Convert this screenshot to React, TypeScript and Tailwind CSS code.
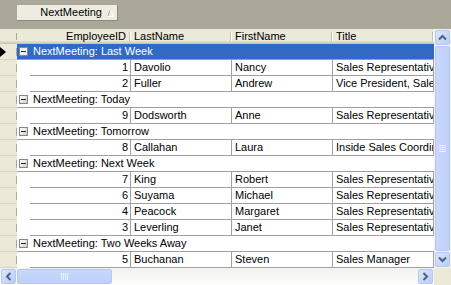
import React from 'react'

type Row = [number, string, string, string]
type Group = { name: string; rows: Row[] }

const GROUPS: Group[] = [
  { name: 'Last Week', rows: [[1, 'Davolio', 'Nancy', 'Sales Representative'], [2, 'Fuller', 'Andrew', 'Vice President, Sales']] },
  { name: 'Today', rows: [[9, 'Dodsworth', 'Anne', 'Sales Representative']] },
  { name: 'Tomorrow', rows: [[8, 'Callahan', 'Laura', 'Inside Sales Coordinator']] },
  {
    name: 'Next Week',
    rows: [
      [7, 'King', 'Robert', 'Sales Representative'],
      [6, 'Suyama', 'Michael', 'Sales Representative'],
      [4, 'Peacock', 'Margaret', 'Sales Representative'],
      [3, 'Leverling', 'Janet', 'Sales Representative'],
    ],
  },
  { name: 'Two Weeks Away', rows: [[5, 'Buchanan', 'Steven', 'Sales Manager']] },
]

const ROT = { up: '', right: 'rotate-90', down: 'rotate-180', left: '-rotate-90' }

function Chevron({ dir }: { dir: keyof typeof ROT }) {
  return (
    <svg width="9" height="7" viewBox="0 0 9 7" className={ROT[dir]}>
      <path d="M1 5.5 L4.5 2 L8 5.5" fill="none" stroke="#4D6185" strokeWidth="2" />
    </svg>
  )
}

function ScrollBtn({ dir }: { dir: keyof typeof ROT }) {
  return (
    <div className="w-[15px] h-[15px] shrink-0 rounded-[2px] border border-[#B4C8F6] bg-gradient-to-br from-[#DCE6FD] to-[#B9CDFA] flex items-center justify-center">
      <Chevron dir={dir} />
    </div>
  )
}

function Indicator({ current }: { current?: boolean }) {
  return (
    <div className="w-[17px] h-4 shrink-0 bg-[#ECE9D8] border-b border-[#D8D4C4] flex items-center justify-between">
      {current ? (
        <svg width="6" height="10" viewBox="0 0 6 10"><path d="M0 0 L6 5 L0 10 Z" fill="#000" /></svg>
      ) : <span />}
      <span className="w-px h-[8px] bg-[#ACA899]" />
    </div>
  )
}

function HeaderCell({ label, right, w }: { label: string; right?: boolean; w: string }) {
  return (
    <div className={`${w} h-full flex items-center shrink-0`}>
      <span className={`flex-1 px-[3px] ${right ? 'text-right' : ''}`}>{label}</span>
      <span className="w-[2px] h-[9px] border-l border-[#C5C2B2] border-r border-r-white" />
    </div>
  )
}

function MinusBox({ selected }: { selected?: boolean }) {
  return (
    <span className={`ml-[2px] w-[9px] h-[9px] shrink-0 border border-[#7A8A99] flex items-center justify-center ${selected ? 'bg-[#F0F0EA]' : 'bg-gradient-to-br from-white to-[#D4D0C4]'}`}>
      <span className="w-[5px] h-px bg-[#222]" />
    </span>
  )
}

const CELL = 'w-[101px] shrink-0 border-r border-[#A0A0A0] px-[3px] leading-[15px] whitespace-nowrap overflow-hidden'

export default function App() {
  return (
    <div className="w-[451px] h-[285px] overflow-hidden bg-[#ACA899] flex flex-col font-['Liberation_Sans',Arial,sans-serif] text-[11px] text-black select-none">
      {/* Group by panel */}
      <div className="h-[29px] shrink-0 pl-[17px] pt-[5px]">
        <div className="w-[101px] h-[16px] bg-[#EEECE0] border-b border-r border-[#8C8A7E] flex items-center justify-end pr-[3px] gap-[5px]">
          <span>NextMeeting</span>
          <svg width="7" height="8" viewBox="0 0 7 8">
            <path d="M3.5 0.5 L0.5 7.5" stroke="#ACA899" fill="none" />
            <path d="M3.5 0.5 L6.5 7.5 M0.5 7.5 L6.5 7.5" stroke="#FFFFFF" fill="none" />
          </svg>
        </div>
      </div>

      <div className="flex flex-1 min-h-0">
        <div className="w-[434px] shrink-0 overflow-hidden flex flex-col bg-white">
          {/* Header */}
          <div className="h-[15px] shrink-0 flex bg-[#EBE9D8] shadow-[inset_0_-1px_#CBC7B8,inset_0_-2px_#D6D2C2,inset_0_-3px_#E2DECD]">
            <div className="w-[17px] shrink-0 h-full flex items-center justify-end">
              <span className="w-px h-[7px] bg-[#ACA899]" />
            </div>
            <HeaderCell label="EmployeeID" right w="w-[114px]" />
            <HeaderCell label="LastName" w="w-[101px]" />
            <HeaderCell label="FirstName" w="w-[101px]" />
            <HeaderCell label="Title" w="w-[101px]" />
          </div>

          {GROUPS.map((g, gi) => (
            <React.Fragment key={g.name}>
              <div className="flex h-4 shrink-0">
                <Indicator current={gi === 0} />
                <div className={`w-[417px] shrink-0 flex items-center border-b border-[#A0A0A0] overflow-hidden ${gi === 0 ? 'bg-[#316AC5] text-white' : 'bg-white'}`}>
                  <MinusBox selected={gi === 0} />
                  <span className="ml-[5px] whitespace-nowrap">NextMeeting: {g.name}</span>
                </div>
              </div>
              {g.rows.map(r => (
                <div key={r[0]} className="flex h-4 shrink-0">
                  <Indicator />
                  <div className="w-[13px] shrink-0 bg-white" />
                  <div className="flex w-[404px] shrink-0 border-b border-[#A0A0A0]">
                    <div className={`${CELL} text-right !px-[2px]`}>{r[0]}</div>
                    <div className={CELL}>{r[1]}</div>
                    <div className={CELL}>{r[2]}</div>
                    <div className={CELL}>{r[3]}</div>
                  </div>
                </div>
              ))}
            </React.Fragment>
          ))}
        </div>

        {/* Vertical scrollbar */}
        <div className="w-[17px] shrink-0 flex flex-col items-center py-px bg-[#F4F3EE]">
          <ScrollBtn dir="up" />
          <div className="w-[15px] flex-1 my-px rounded-[2px] border border-[#B4C8F6] bg-gradient-to-r from-[#C9D8FC] to-[#BDD0FA] flex flex-col items-center justify-center gap-px">
            <span className="w-[7px] h-px bg-[#EEF3FE]" />
            <span className="w-[7px] h-px bg-[#EEF3FE]" />
            <span className="w-[7px] h-px bg-[#EEF3FE]" />
            <span className="w-[7px] h-px bg-[#EEF3FE]" />
          </div>
          <ScrollBtn dir="down" />
        </div>
      </div>

      {/* Horizontal scrollbar */}
      <div className="h-[17px] shrink-0 flex">
        <div className="w-[434px] shrink-0 flex items-center px-px bg-gradient-to-b from-[#F3F1EC] to-[#FEFEFB]">
          <ScrollBtn dir="left" />
          <div className="w-[95px] h-[15px] mx-px rounded-[2px] border border-[#B4C8F6] bg-gradient-to-b from-[#C9D8FC] to-[#BDD0FA] flex items-center justify-center gap-px">
            <span className="w-px h-[7px] bg-[#EEF3FE]" />
            <span className="w-px h-[7px] bg-[#EEF3FE]" />
            <span className="w-px h-[7px] bg-[#EEF3FE]" />
            <span className="w-px h-[7px] bg-[#EEF3FE]" />
          </div>
          <div className="flex-1" />
          <ScrollBtn dir="right" />
        </div>
        <div className="flex-1 bg-[#ECE9D8]" />
      </div>
    </div>
  )
}
